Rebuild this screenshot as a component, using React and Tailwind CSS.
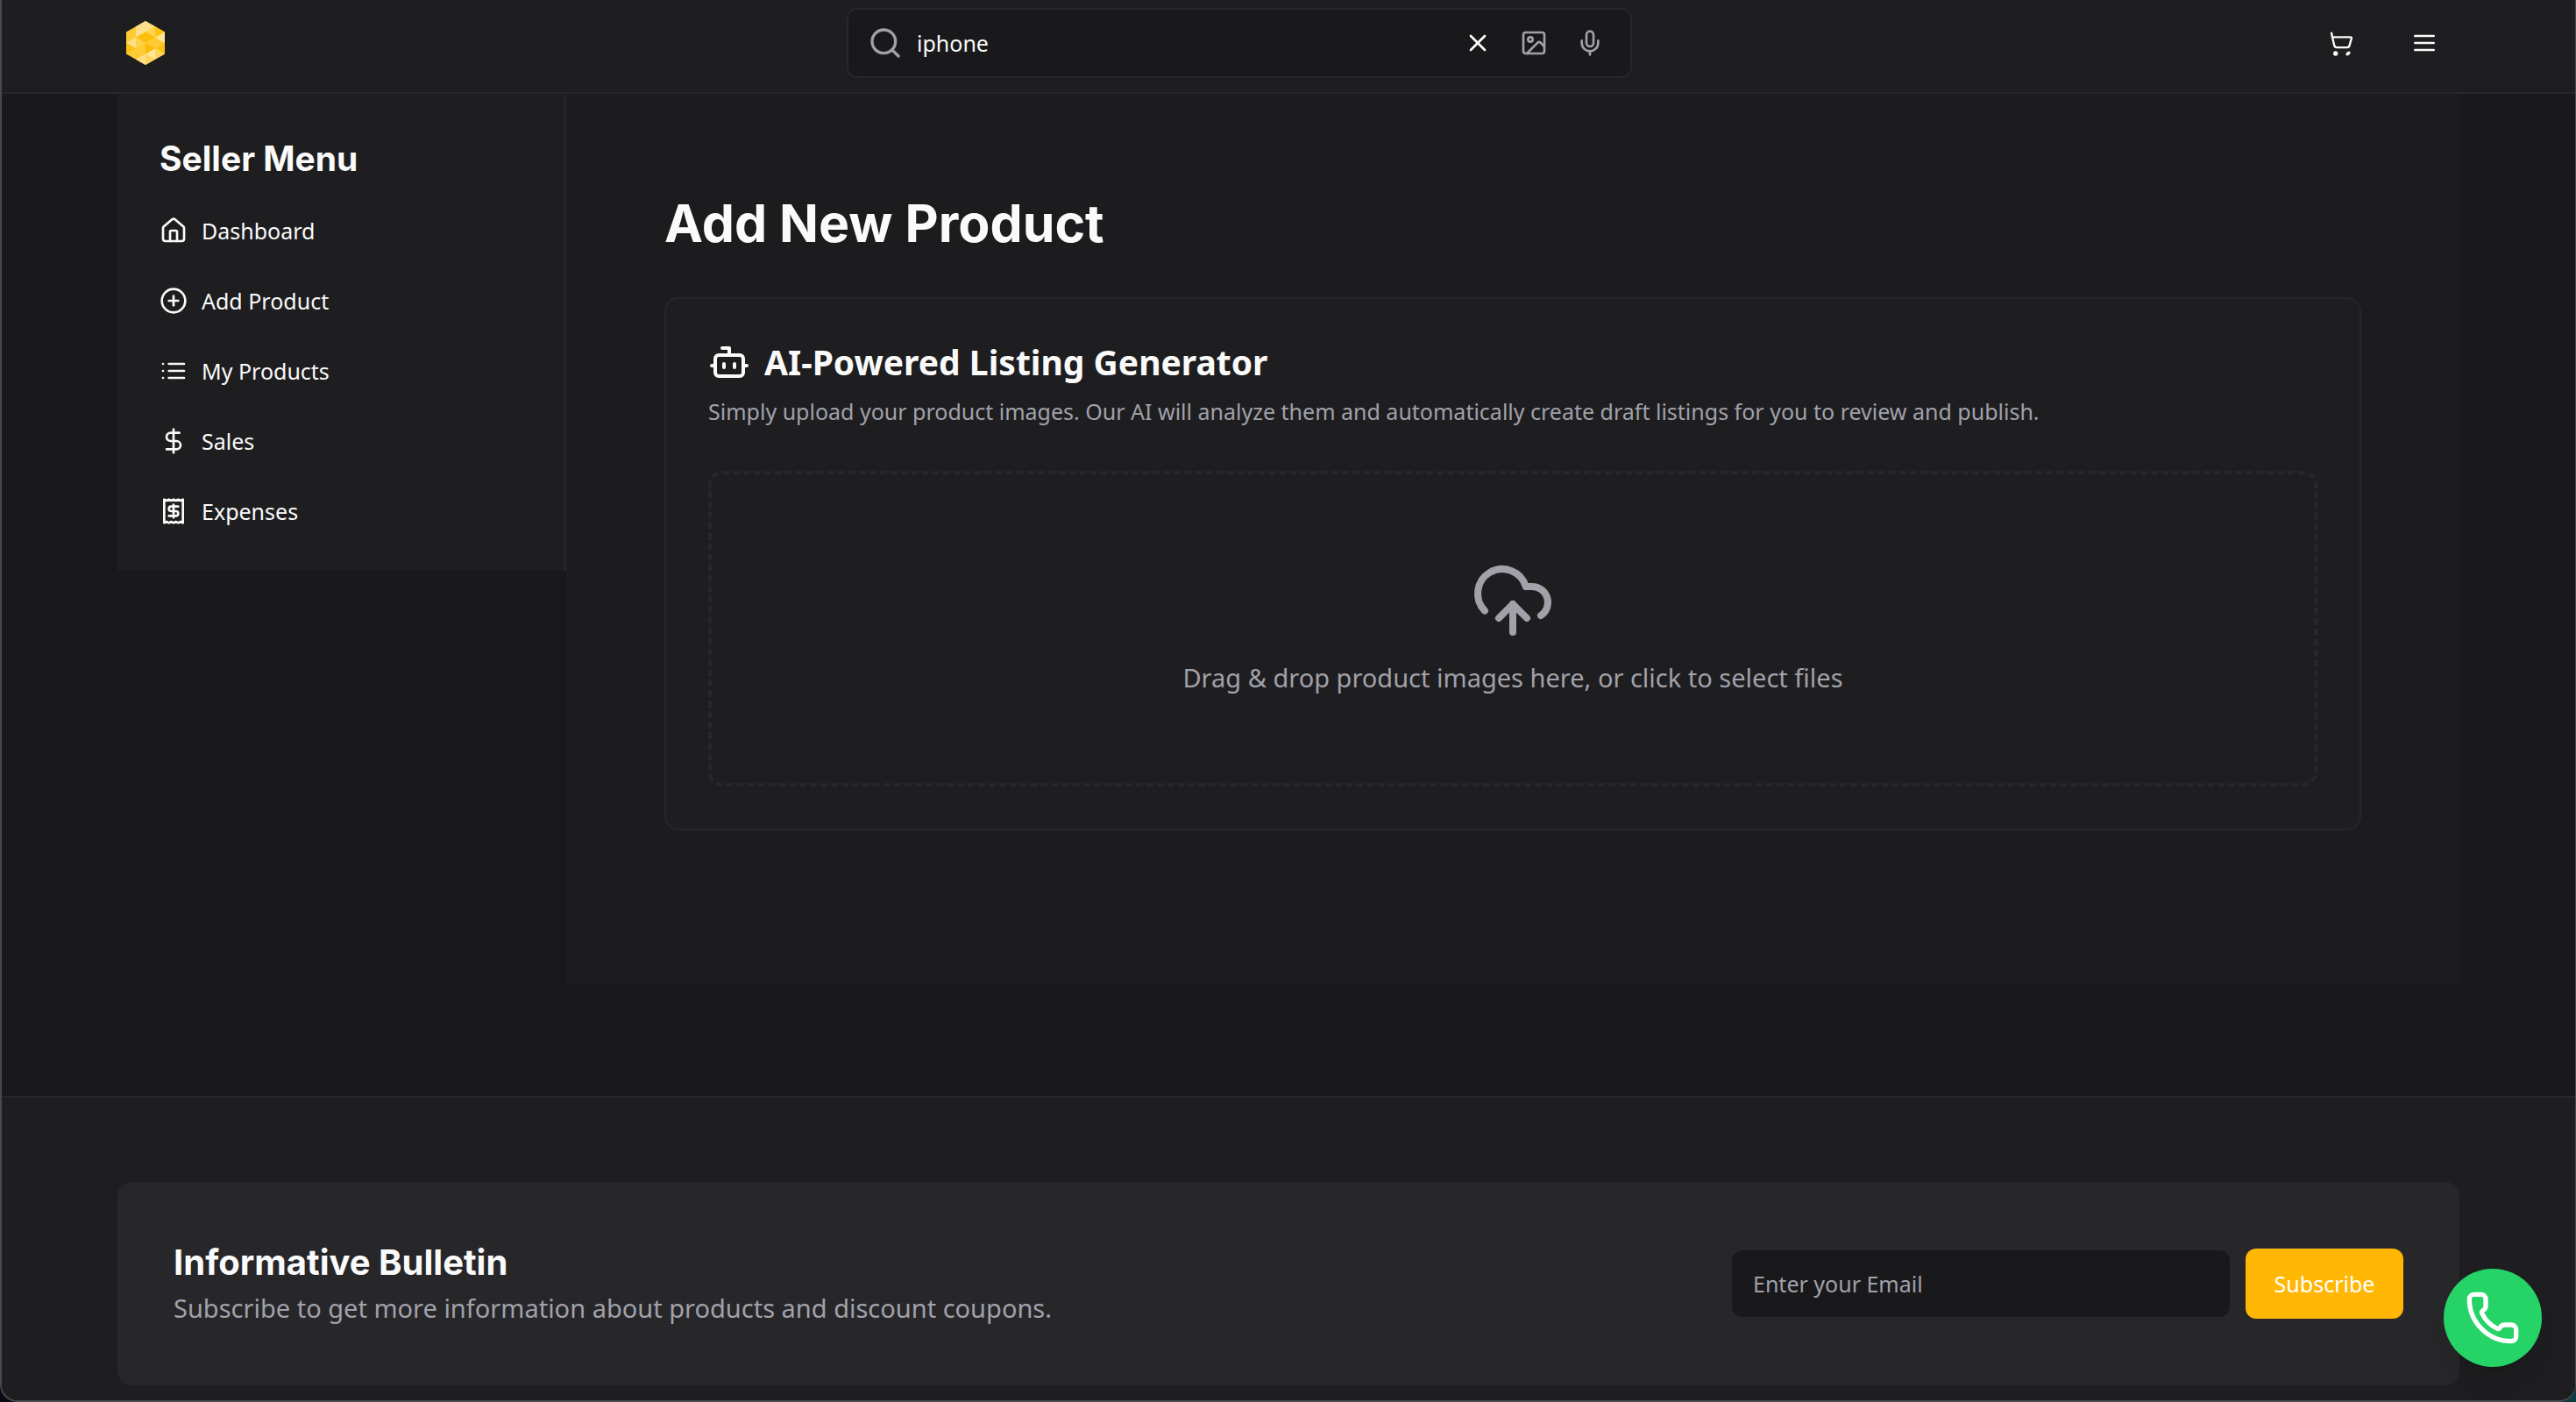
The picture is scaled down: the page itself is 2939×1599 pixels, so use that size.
import { House, CirclePlus, DollarSign, Search, X, Image, Mic, Bot, CloudUpload, Phone } from "lucide-react";

function Svg({ children, className }) {
  return (
    <svg viewBox="0 0 24 24" fill="none" stroke="currentColor" strokeWidth="2" strokeLinecap="round" strokeLinejoin="round" className={className} aria-hidden="true">
      {children}
    </svg>
  );
}

const ListIcon = ({ className }) => (
  <Svg className={className}>
    <path d="M3 6h.01M3 12h.01M3 18h.01M8 6h13M8 12h13M8 18h13" />
  </Svg>
);

const MenuIcon = ({ className }) => (
  <Svg className={className}>
    <path d="M4 6h16M4 12h16M4 18h16" />
  </Svg>
);

const ReceiptIcon = ({ className }) => (
  <Svg className={className}>
    <path d="M4 2v20l2-1 2 1 2-1 2 1 2-1 2 1 2-1 2 1V2l-2 1-2-1-2 1-2-1-2 1-2-1-2 1Z" />
    <path d="M16 8h-6a2 2 0 1 0 0 4h4a2 2 0 1 1 0 4H8M12 17.5v-11" />
  </Svg>
);

const CartIcon = ({ className }) => (
  <svg viewBox="0 0 32 32" fill="none" stroke="currentColor" strokeWidth="2.4" strokeLinecap="round" strokeLinejoin="round" className={className} aria-hidden="true">
    <path d="M4 4.6 5 9.4l2.2 9.4a3 3 0 0 0 2.9 2.3h11.6a3 3 0 0 0 2.9-2.3l2.3-8.2a1 1 0 0 0-1-1.2H5" />
    <circle cx="8.7" cy="28" r="2.7" fill="currentColor" stroke="none" />
    <ellipse cx="23" cy="28" rx="3" ry="1.9" transform="rotate(-38 23 28)" fill="currentColor" stroke="none" />
  </svg>
);

// Gem logo: a hexagon built from triangles
function Logo() {
  return (
    <svg viewBox="0 0 44 50" className="h-[50px] w-11" aria-hidden="true">
      <polygon points="22,0 44,12.5 44,37.5 22,50 0,37.5 0,12.5" fill="#fecb35" />
      <polygon points="22,0 33,6.25 11,18.75 11,6.25" fill="#ffe08a" />
      <polygon points="33,6.25 44,12.5 33,18.75" fill="#fdc50f" />
      <polygon points="33,6.25 33,18.75 22,12.5" fill="#fed34f" />
      <polygon points="22,12.5 33,18.75 22,25 11,18.75" fill="#fdbf0a" />
      <polygon points="44,12.5 44,25 33,18.75" fill="#ffe699" />
      <polygon points="11,18.75 11,31.25 0,25" fill="#ffe08a" />
      <polygon points="0,25 11,31.25 0,37.5" fill="#fdc210" />
      <polygon points="11,18.75 22,25 11,31.25" fill="#fed14a" />
      <polygon points="22,25 33,31.25 22,37.5" fill="#fdbb05" />
      <polygon points="33,31.25 44,25 44,37.5" fill="#fdc210" />
      <polygon points="22,37.5 33,31.25 33,43.75" fill="#ffe699" />
      <polygon points="33,31.25 44,37.5 33,43.75" fill="#fed65e" />
      <polygon points="22,37.5 22,50 11,43.75" fill="#ffe08a" />
      <polygon points="22,37.5 33,43.75 22,50" fill="#fed65e" />
    </svg>
  );
}

const menu = [
  { label: "Dashboard", Icon: House },
  { label: "Add Product", Icon: CirclePlus },
  { label: "My Products", Icon: ListIcon },
  { label: "Sales", Icon: DollarSign },
  { label: "Expenses", Icon: ReceiptIcon },
];

export default function App() {
  return (
    <div className="bg-linear-to-r from-[#0a0a14] to-[#0e3a44]">
      <div className="min-h-screen overflow-hidden rounded-b-[20px] border-b-2 border-l-2 border-r border-[#4a4a4c] bg-[#19191b] font-['Noto_Sans',sans-serif] text-[25px] leading-10 text-[#fafafa]">
        <header className="border-b-2 border-[#27272a] bg-[#1e1e20]">
          <div className="mx-[132px] grid h-[105px] grid-cols-[1fr_896px_1fr] items-start pt-[9px]">
            <a href="#home" aria-label="Home" className="flex h-20 items-center pl-2.5">
              <Logo />
            </a>
            <form className="-ml-14 mr-14 flex h-20 w-[896px] items-center rounded-xl border-2 border-[#27272a] bg-[#19191b] pl-[22px] pr-3.5 text-[#a1a1aa]">
              <Search className="size-10" />
              <input aria-label="Search" defaultValue="iphone" className="ml-4 min-w-0 flex-1 bg-transparent text-[#fafafa] outline-none" />
              <button type="button" aria-label="Clear" className="flex w-16 justify-center text-white">
                <X className="size-8" />
              </button>
              <button type="button" aria-label="Search by image" className="flex w-16 justify-center">
                <Image className="size-8" />
              </button>
              <button type="button" aria-label="Search by voice" className="flex w-16 justify-center">
                <Mic className="size-8" />
              </button>
            </form>
            <div className="flex h-20 items-center justify-end gap-[62px] pr-6">
              <button type="button" aria-label="Cart">
                <CartIcon className="size-8" />
              </button>
              <button type="button" aria-label="Menu">
                <MenuIcon className="size-8" />
              </button>
            </div>
          </div>
        </header>

        <div className="mx-[132px] flex items-start">
          <aside className="w-[512px] shrink-0 border-r-2 border-[#27272a] bg-[#1e1e20] px-12 pb-7 pt-12">
            <h2 className="mb-4 font-['Inter',sans-serif] text-[39px] font-bold leading-[52px]">Seller Menu</h2>
            <nav>
              {menu.map(({ label, Icon }) => (
                <a key={label} href="#menu" className="flex h-20 items-center gap-4">
                  <Icon className="size-8" />
                  {label}
                </a>
              ))}
            </nav>
          </aside>

          <main className="flex-1 bg-[#1c1c1e] px-28 pb-[175px] pt-28">
            <h1 className="font-['Inter',sans-serif] text-[59px] font-bold leading-[72px]">Add New Product</h1>
            <section className="mt-12 rounded-2xl border-2 border-[#27272a] bg-[#1e1e20] p-12">
              <h2 className="flex h-12 items-center gap-4 text-[39px] font-bold leading-[48px]">
                <Bot className="size-12" />
                AI-Powered Listing Generator
              </h2>
              <p className="mt-3 text-[#a1a1aa]">
                Simply upload your product images. Our AI will analyze them and automatically create draft listings for you to review and publish.
              </p>
              <button type="button" className="mt-12 flex h-[360px] w-full flex-col items-center justify-center gap-4 rounded-2xl border-4 border-dashed border-[#27272a] text-[29px] leading-[48px] text-[#a1a1aa]">
                <CloudUpload className="size-24" />
                Drag &amp; drop product images here, or click to select files
              </button>
            </section>
          </main>
        </div>

        <footer className="mt-32 border-t-2 border-[#27272a] bg-[#1e1e20] px-[132px] pb-4 pt-24">
          <div className="flex h-[232px] items-center justify-between rounded-2xl bg-[#27272a] px-16">
            <div>
              <h2 className="font-['Inter',sans-serif] text-[40px] font-bold leading-[56px]">Informative Bulletin</h2>
              <p className="text-[29px] leading-[48px] text-[#a1a1aa]">Subscribe to get more information about products and discount coupons.</p>
            </div>
            <form className="flex items-center gap-[18px]">
              <input type="email" aria-label="Email" placeholder="Enter your Email" className="h-[76px] w-[568px] rounded-xl bg-[#19191b] px-6 outline-none placeholder:text-[#a1a1aa]" />
              <button type="button" className="h-20 w-[180px] rounded-xl bg-[#ffb703] text-center text-white">Subscribe</button>
            </form>
          </div>
        </footer>

        <a href="#call" aria-label="Call" className="fixed bottom-10 right-[39px] flex size-28 items-center justify-center rounded-full bg-[#25d366] text-white shadow-xl">
          <Phone className="size-16" />
        </a>
      </div>
    </div>
  );
}
